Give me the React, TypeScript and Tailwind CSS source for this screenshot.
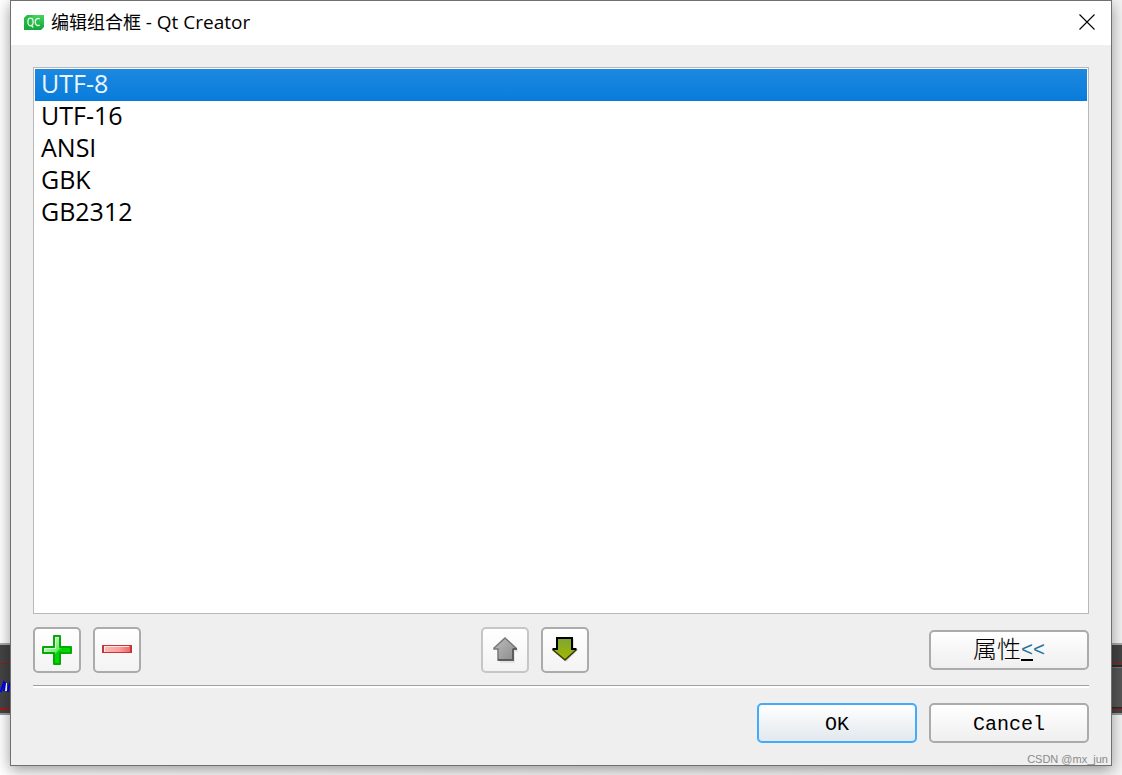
import { useState } from "react"

const encodings = ["UTF-8", "UTF-16", "ANSI", "GBK", "GB2312"]

const toolButton =
  "flex h-[46px] w-12 items-center justify-center rounded-[5px] border-2 bg-linear-to-b from-white to-[#f3f3f3]"
const textButton =
  "flex h-10 w-40 items-center justify-center rounded-[5px] border-2 bg-linear-to-b pt-1 font-['Liberation_Mono','Noto_Sans_CJK_SC',monospace] text-xl leading-6 text-black"

function QtLogo() {
  return (
    <svg width="20" height="15" viewBox="0 0 20 15" aria-hidden="true">
      <defs>
        <linearGradient id="qt" x1="0" y1="0" x2="0" y2="1">
          <stop offset="0" stopColor="#45d35c" />
          <stop offset="1" stopColor="#12a53a" />
        </linearGradient>
      </defs>
      <path d="M3 0H20V12L17 15H0V3Z" fill="url(#qt)" />
      <path d="M0 15V3L3 0H9L3 15Z" fill="#17a93c" opacity=".5" />
      <g fill="none" stroke="#e2f8e5" strokeWidth="1.3">
        <ellipse cx="6.5" cy="7" rx="2.6" ry="3.8" />
        <path d="M7.2 10L9.2 12.5M15.8 4C13.6 2.6 11.2 4 11.2 7S13.6 11.4 15.8 10" />
      </g>
    </svg>
  )
}

function PlusIcon() {
  return (
    <svg width="30" height="30" viewBox="0 0 30 30" aria-hidden="true">
      <defs>
        <linearGradient id="plus" x1="0" y1="0" x2="1" y2="1">
          <stop offset=".2" stopColor="#c5f9c5" />
          <stop offset=".5" stopColor="#6fec6f" />
          <stop offset=".56" stopColor="#00d400" />
          <stop offset="1" stopColor="#00ea00" />
        </linearGradient>
      </defs>
      <path
        d="M12 1H18V12H29V18H18V29H12V18H1V12H12Z"
        fill="url(#plus)"
        stroke="#06a806"
        strokeWidth="2"
        strokeLinejoin="round"
      />
      <path d="M13.5 12V2.5H17M2.5 17V13.5H13.5V11" fill="none" stroke="#d9ffd9" />
    </svg>
  )
}

function MinusIcon() {
  return (
    <svg width="30" height="30" viewBox="0 0 30 30" aria-hidden="true">
      <defs>
        <linearGradient id="minus" x1="0" y1="0" x2="1" y2="0">
          <stop offset="0" stopColor="#ffb9b9" />
          <stop offset=".6" stopColor="#ff9a9a" />
          <stop offset="1" stopColor="#f06767" />
        </linearGradient>
      </defs>
      <rect y="10" width="30" height="8" fill="#c03838" />
      <rect x="2" y="11" width="26" height="6" fill="url(#minus)" />
      <path d="M2.5 17V11.5H27" fill="none" stroke="#ffe4e4" />
    </svg>
  )
}

function UpIcon() {
  return (
    <svg width="26" height="26" viewBox="0 0 26 26" aria-hidden="true">
      <defs>
        <linearGradient id="up" x1="0" y1="0" x2="1" y2="1">
          <stop offset="0" stopColor="#bcbcbc" />
          <stop offset="1" stopColor="#8c8c8c" />
        </linearGradient>
      </defs>
      <path d="M14 3L27 13V15H23V26H8V15Z" fill="#000" opacity=".07" />
      <path d="M13 1L24 11V12H21V23H6V12H2V11Z" fill="url(#up)" stroke="#777" strokeWidth="1.5" />
      <path d="M6 23H21V12M25 12H21" fill="none" stroke="#5c5c5c" strokeWidth="2" />
    </svg>
  )
}

function DownIcon() {
  return (
    <svg width="26" height="26" viewBox="0 0 26 26" aria-hidden="true">
      <defs>
        <linearGradient id="down" x1="0" y1="0" x2="0" y2="1">
          <stop offset="0" stopColor="#7da632" />
          <stop offset="1" stopColor="#a3b800" />
        </linearGradient>
      </defs>
      <path d="M8 2H22V12H27L14 25Z" fill="#000" opacity=".12" />
      <path d="M5 1H20V12H24V13L13 23L1 13V12H5Z" fill="url(#down)" stroke="#39350e" strokeWidth="1.6" />
      <path d="M5 13V1H20V12M1 12H6M19 12H24" fill="none" stroke="#000" strokeWidth="2" />
    </svg>
  )
}

// strip of the editor that shows on both sides of the dialog
function EditorStrip() {
  return (
    <div className="absolute inset-x-0 bottom-[60px] flex h-[72px] justify-between border-t-2 border-b-2 border-t-[#aaa] border-b-[#999] bg-[#444]">
      <svg width="11" height="68" viewBox="0 0 11 68" aria-hidden="true">
        <path d="M0 18.5H11" stroke="#8c2020" />
        <path d="M0 64H11" stroke="#a01c1c" strokeWidth="2" />
        <path d="M6 38V46" stroke="#fff" strokeWidth="2" />
        <path d="M0 45L1 46L4 37L5 38L4 46M7 46H8L10 38L11 37" fill="none" stroke="#0000f0" strokeWidth="2" />
      </svg>
      <svg width="11" height="68" viewBox="0 0 11 68" aria-hidden="true">
        <path d="M0 18.5H11" stroke="#a01c1c" />
        <path d="M0 21H11M0 62.5H11" stroke="#2c2c2c" strokeWidth="2" />
        <rect y="22" width="11" height="40" fill="#575757" />
        <path d="M0 22.5H11" stroke="#777" />
        <path d="M0 64.5H11" stroke="#a01c1c" />
      </svg>
    </div>
  )
}

export default function App() {
  const [selected, setSelected] = useState("UTF-8")

  return (
    <div className="relative isolate flex min-h-screen flex-col overflow-hidden bg-linear-to-r from-white to-[#f4f4f4] px-2.5 pb-[9px] font-['Open_Sans','Noto_Sans_CJK_SC',sans-serif] text-black">
      <EditorStrip />
      <div className="relative flex flex-1 flex-col border border-[#707070] bg-[#efefef] shadow-[0_4px_14px_rgba(0,0,0,0.4)]">
        <header className="flex h-11 items-center justify-between bg-white pr-4 pb-0.5 pl-[13px]">
          <div className="flex items-center gap-[7px]">
            <QtLogo />
            <h1 className="text-lg leading-6">
              编辑组合框 <span className="text-[19px]">- Qt Creator</span>
            </h1>
          </div>
          <button type="button" aria-label="Close">
            <svg width="16" height="16" viewBox="0 0 16 16" aria-hidden="true">
              <path d="M.5 .5L15.5 15.5M15.5 .5L.5 15.5" stroke="#000" strokeWidth="1.1" />
            </svg>
          </button>
        </header>

        <main className="flex flex-1 flex-col p-[22px]">
          <ul className="flex-1 border border-[#b9b9b9] bg-white p-px">
            {encodings.map((name) => (
              <li key={name}>
                <button
                  type="button"
                  aria-pressed={name === selected}
                  onClick={() => setSelected(name)}
                  className={`block h-8 w-full px-1.5 pb-1 text-left text-[25px] leading-7 ${
                    name === selected ? "bg-linear-to-b from-[#1c88e0] to-[#077cdb] text-[#eaf5ff]" : ""
                  }`}
                >
                  {name}
                </button>
              </li>
            ))}
          </ul>

          {/* item actions */}
          <div className="mt-[13px] flex items-center justify-between">
            <div className="flex gap-3">
              <button type="button" aria-label="Add" className={`${toolButton} border-[#ababab]`}>
                <PlusIcon />
              </button>
              <button type="button" aria-label="Remove" className={`${toolButton} border-[#ababab]`}>
                <MinusIcon />
              </button>
            </div>
            <div className="flex gap-3">
              <button type="button" aria-label="Move up" disabled className={`${toolButton} border-[#c6c6c6]`}>
                <UpIcon />
              </button>
              <button type="button" aria-label="Move down" className={`${toolButton} border-[#ababab]`}>
                <DownIcon />
              </button>
            </div>
            <button type="button" className={`${textButton} border-[#ababab] from-white to-[#efefef]`}>
              <span className="pb-2 font-['Noto_Sans_CJK_SC',sans-serif] text-2xl leading-6 font-light">属性</span>
              <span className="border-b-2 border-black leading-4 text-[#23729e]">&lt;</span>
              <span className="border-b-2 border-transparent leading-4 text-[#23729e]">&lt;</span>
            </button>
          </div>

          <div className="mt-3 border-t border-[#a0a0a0]">
            <div className="h-0.5 bg-white" />
          </div>

          <div className="mt-[15px] flex justify-end gap-3">
            <button type="button" className={`${textButton} border-[#43abfb] from-white to-[#e2e8ee]`}>
              OK
            </button>
            <button type="button" className={`${textButton} border-[#ababab] from-white to-[#efefef]`}>
              Cancel
            </button>
          </div>
        </main>

        <p className="absolute right-[3px] bottom-0 font-['Liberation_Sans',sans-serif] text-[11px] leading-3 text-[#8a8a8a]">
          CSDN @mx_jun
        </p>
      </div>
    </div>
  )
}
